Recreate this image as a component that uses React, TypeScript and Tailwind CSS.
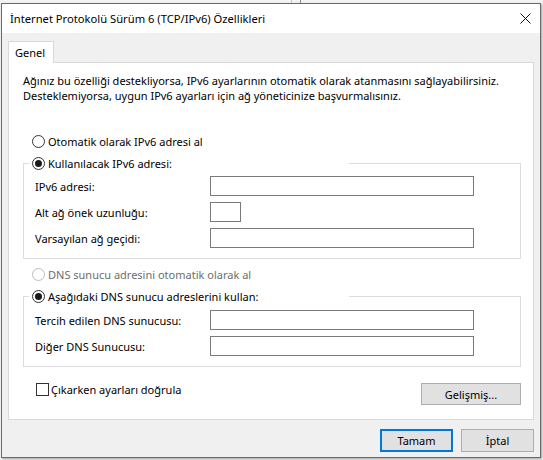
import React from "react";

function Radio({ checked, disabled }: { checked?: boolean; disabled?: boolean }) {
  return (
    <span
      className={
        disabled
          ? "flex w-[13px] h-[13px] shrink-0 rounded-full border border-[#bcbcbc] bg-white items-center justify-center"
          : "flex w-[13px] h-[13px] shrink-0 rounded-full border border-[#333333] bg-white items-center justify-center"
      }
    >
      {checked && <span className="block w-[7px] h-[7px] rounded-full bg-[#1a1a1a]" />}
    </span>
  );
}

function Field({ label, small }: { label: string; small?: boolean }) {
  return (
    <div className="flex items-center h-[20px] pl-[11px]">
      <span className="w-[175px] shrink-0">{label}</span>
      <div
        className={
          small
            ? "w-[31px] h-[20px] border border-[#7a7a7a] bg-white"
            : "w-[264px] h-[20px] border border-[#7a7a7a] bg-white"
        }
      />
    </div>
  );
}

export default function App() {
  return (
    <div className="relative w-[543px] h-[460px] bg-[#f3f3f3] overflow-hidden pl-[1px] text-[11px] leading-[15px] text-black font-['Noto_Sans',sans-serif]">
      {/* desktop strip behind the window */}
      <div className="h-[3px] flex">
        <div className="w-[290px]" />
        <div className="w-px h-[3px] bg-[#c4c4c4]" />
        <div className="w-[8px]" />
        <div className="w-px h-[3px] bg-[#8a8a8a]" />
      </div>
      <div className="w-[540px] h-[455px] border border-[#6b6b6b] bg-[#f0f0f0] flex flex-col shadow-[1px_1px_2px_rgba(0,0,0,0.35)]">
        {/* title bar */}
        <div className="h-[29px] shrink-0 bg-white flex items-center justify-between pl-[8px] pr-[8px]">
          <span className="text-[11.2px] leading-[16px]">İnternet Protokolü Sürüm 6 (TCP/IPv6) Özellikleri</span>
          <svg width="11" height="11" viewBox="0 0 11 11" className="mr-[1px]">
            <path d="M0.5 0.5 L10.5 10.5 M10.5 0.5 L0.5 10.5" stroke="#111" strokeWidth="1" fill="none" />
          </svg>
        </div>
        {/* body */}
        <div className="flex-1 flex flex-col pt-[8px] pl-[6px] pr-[6px]">
          <div className="relative z-10 -mb-px w-[46px] h-[22px] border border-b-0 border-[#d9d9d9] bg-white pl-[6px] flex items-center">
            Genel
          </div>
          <div className="w-[526px] h-[358px] border border-[#d9d9d9] bg-white flex flex-col">
            <div className="pl-[14px] pt-[10px] leading-[15px] whitespace-nowrap">
              <div>Ağınız bu özelliği destekliyorsa, IPv6 ayarlarının otomatik olarak atanmasını sağlayabilirsiniz.</div>
              <div>Desteklemiyorsa, uygun IPv6 ayarları için ağ yöneticinize başvurmalısınız.</div>
            </div>

            <div className="mt-[30px] h-[16px] pl-[23px] flex items-center gap-[3px]">
              <Radio />
              <span>Otomatik olarak IPv6 adresi al</span>
            </div>

            <fieldset className="mt-[6px] ml-[14px] w-[498px] border border-[#dcdcdc] px-0 pb-[10px] m-0">
              <legend className="ml-[5px] w-[320px] h-[16px] p-0 bg-white">
                <div className="flex items-center h-[16px] pl-[3px] gap-[3px]">
                  <Radio checked />
                  <span>Kullanılacak IPv6 adresi:</span>
                </div>
              </legend>
              <div className="flex flex-col gap-[6px] mt-[5px]">
                <Field label="IPv6 adresi:" />
                <Field label="Alt ağ önek uzunluğu:" small />
                <Field label="Varsayılan ağ geçidi:" />
              </div>
            </fieldset>

            <div className="mt-[7px] h-[16px] pl-[23px] flex items-center gap-[3px] text-[#6d6d6d]">
              <Radio disabled />
              <span>DNS sunucu adresini otomatik olarak al</span>
            </div>

            <fieldset className="mt-[6px] ml-[14px] w-[498px] border border-[#dcdcdc] px-0 pb-[10px] m-0">
              <legend className="ml-[5px] w-[320px] h-[16px] p-0 bg-white">
                <div className="flex items-center h-[16px] pl-[3px] gap-[3px]">
                  <Radio checked />
                  <span>Aşağıdaki DNS sunucu adreslerini kullan:</span>
                </div>
              </legend>
              <div className="flex flex-col gap-[6px] mt-[6px]">
                <Field label="Tercih edilen DNS sunucusu:" />
                <Field label="Diğer DNS Sunucusu:" />
              </div>
            </fieldset>

            <div className="mt-[16px] flex items-start justify-between pl-[27px] pr-[12px]">
              <div className="flex items-center gap-[2px] h-[13px]">
                <span className="block w-[13px] h-[13px] border border-[#333333] bg-white" />
                <span>Çıkarken ayarları doğrula</span>
              </div>
              <button className="w-[100px] h-[22px] border border-[#adadad] bg-[#e1e1e1] flex items-center justify-center">
                Gelişmiş...
              </button>
            </div>
          </div>

          <div className="mt-[9px] flex justify-end gap-[8px]">
            <button className="w-[73px] h-[23px] border-2 border-[#0078d7] bg-[#e1e1e1] flex items-center justify-center">
              Tamam
            </button>
            <button className="w-[73px] h-[23px] border border-[#adadad] bg-[#e1e1e1] flex items-center justify-center">
              İptal
            </button>
          </div>
        </div>
      </div>
    </div>
  );
}
